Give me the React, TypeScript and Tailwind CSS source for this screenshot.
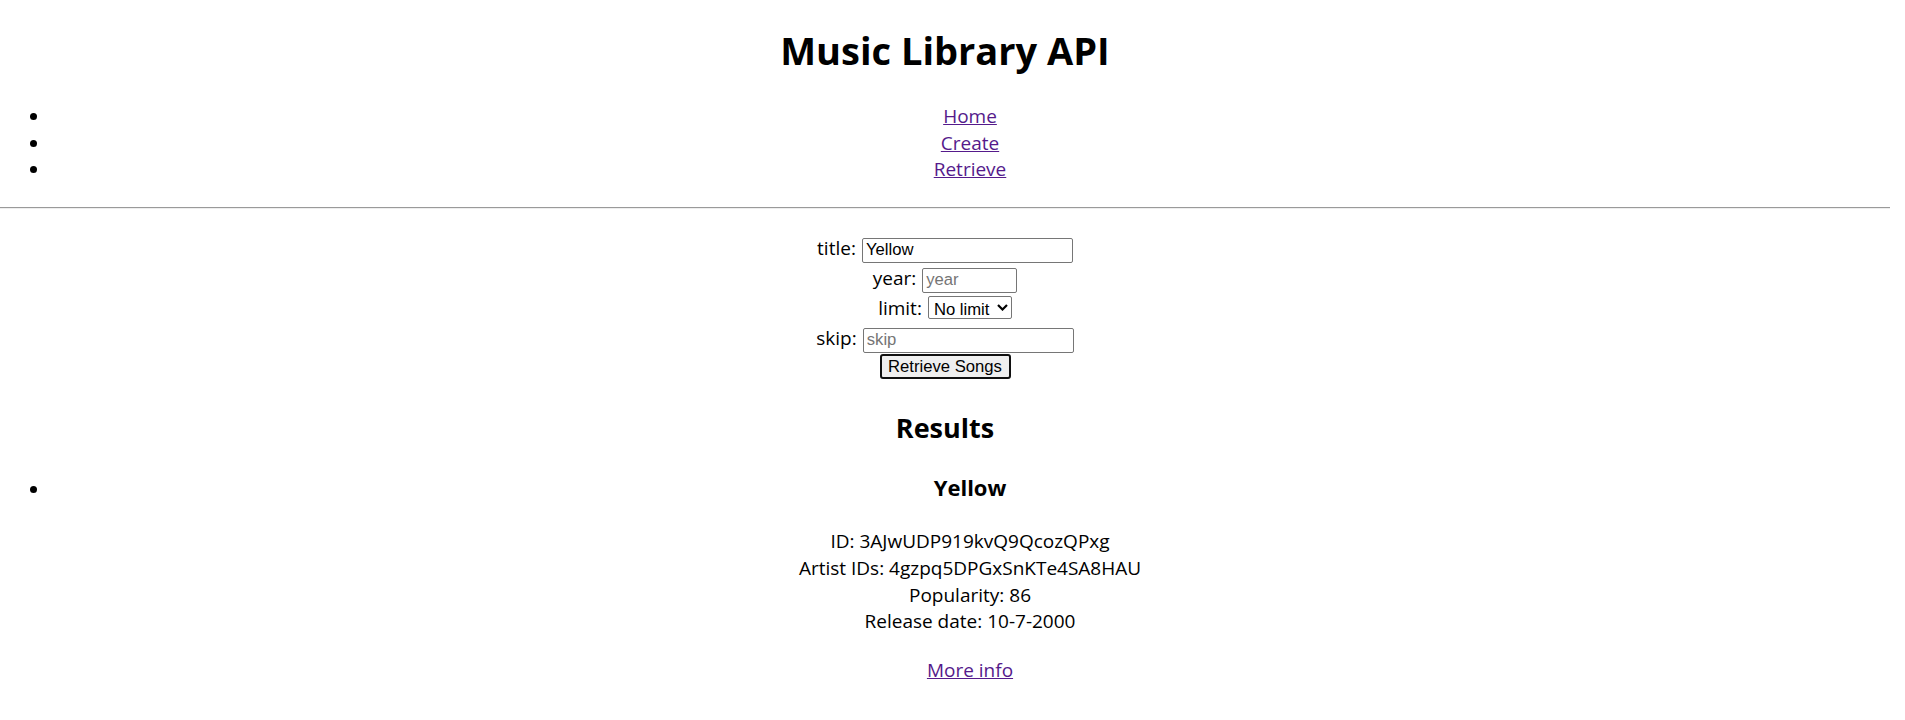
import { useState } from 'react'

const NAV = ['Home', 'Create', 'Retrieve']

const SONG = {
  title: 'Yellow',
  id: '3AJwUDP919kvQ9QcozQPxg',
  artists: '4gzpq5DPGxSnKTe4SA8HAU',
  popularity: 86,
  released: '10-7-2000',
}

const inputCls =
  "h-[25px] rounded-[2px] border border-[#767676] bg-white px-[3px] font-['Liberation_Sans',Arial,sans-serif] text-[16.67px] text-black outline-none placeholder:text-[#757575]"

export default function App() {
  const [title, setTitle] = useState('Yellow')

  return (
    <div className="min-h-[720px] w-[1890px] bg-white text-center font-['Open_Sans',sans-serif] text-[19px] leading-[26.6px] text-black">
      <h1 className="pt-[24px] text-[38px] font-bold leading-[53px]">Music Library API</h1>

      {/* Nav */}
      <ul className="mt-[26px] list-disc pl-[50px]">
        {NAV.map((item) => (
          <li key={item}>
            <a href="#" className="text-[#551a8b] underline">
              {item}
            </a>
          </li>
        ))}
      </ul>

      <hr className="mt-[24.2px] h-0 border-0 border-t border-b border-t-[#9a9a9a] border-b-[#eeeeee]" />

      {/* Search form */}
      <form className="mt-[26.5px] flex flex-col" onSubmit={(e) => e.preventDefault()}>
        <div className="flex h-[29.75px] items-baseline justify-center gap-[6px]">
          <label>title:</label>
          <input className={`${inputCls} w-[211px]`} value={title} onChange={(e) => setTitle(e.target.value)} />
        </div>
        <div className="flex h-[29.75px] items-baseline justify-center gap-[6px]">
          <label>year:</label>
          <input className={`${inputCls} w-[95px]`} placeholder="year" />
        </div>
        <div className="flex h-[29.75px] items-baseline justify-center gap-[6px]">
          <label>limit:</label>
          <span className="relative inline-flex">
            <select className="h-[23px] w-[84px] appearance-none rounded-[2px] border border-[#767676] bg-white pl-[5px] font-['Liberation_Sans',Arial,sans-serif] text-[16.67px] text-black outline-none">
              <option>No limit</option>
              <option>10</option>
              <option>25</option>
              <option>50</option>
            </select>
            <svg className="pointer-events-none absolute right-[4px] top-[8px]" width="11" height="7" viewBox="0 0 11 7">
              <path d="M1 1l4.5 4.5L10 1" fill="none" stroke="#000" strokeWidth="2.2" />
            </svg>
          </span>
        </div>
        <div className="flex h-[29.75px] items-baseline justify-center gap-[6px]">
          <label>skip:</label>
          <input className={`${inputCls} w-[211px]`} placeholder="skip" />
        </div>
        <div className="flex h-[29.75px] items-baseline justify-center">
          <button
            type="submit"
            className="h-[25px] w-[131px] rounded-[3px] border-2 border-[#101010] bg-[#efefef] font-['Liberation_Sans',Arial,sans-serif] text-[16.67px] leading-[19px] text-black"
          >
            Retrieve Songs
          </button>
        </div>
      </form>

      {/* Results */}
      <h2 className="mt-[25.2px] text-[27px] font-bold leading-[37px]">Results</h2>
      <ul className="mt-[27px] list-disc pl-[50px]">
        <li>
          <h3 className="text-[22px] font-bold leading-[29px]">{SONG.title}</h3>
          <p className="mt-[26px]">
            ID: {SONG.id}
            <br />
            Artist IDs: {SONG.artists}
            <br />
            Popularity: {SONG.popularity}
            <br />
            Release date: {SONG.released}
          </p>
          <p className="mt-[22px]">
            <a href="#" className="text-[#551a8b] underline">
              More info
            </a>
          </p>
        </li>
      </ul>
    </div>
  )
}
